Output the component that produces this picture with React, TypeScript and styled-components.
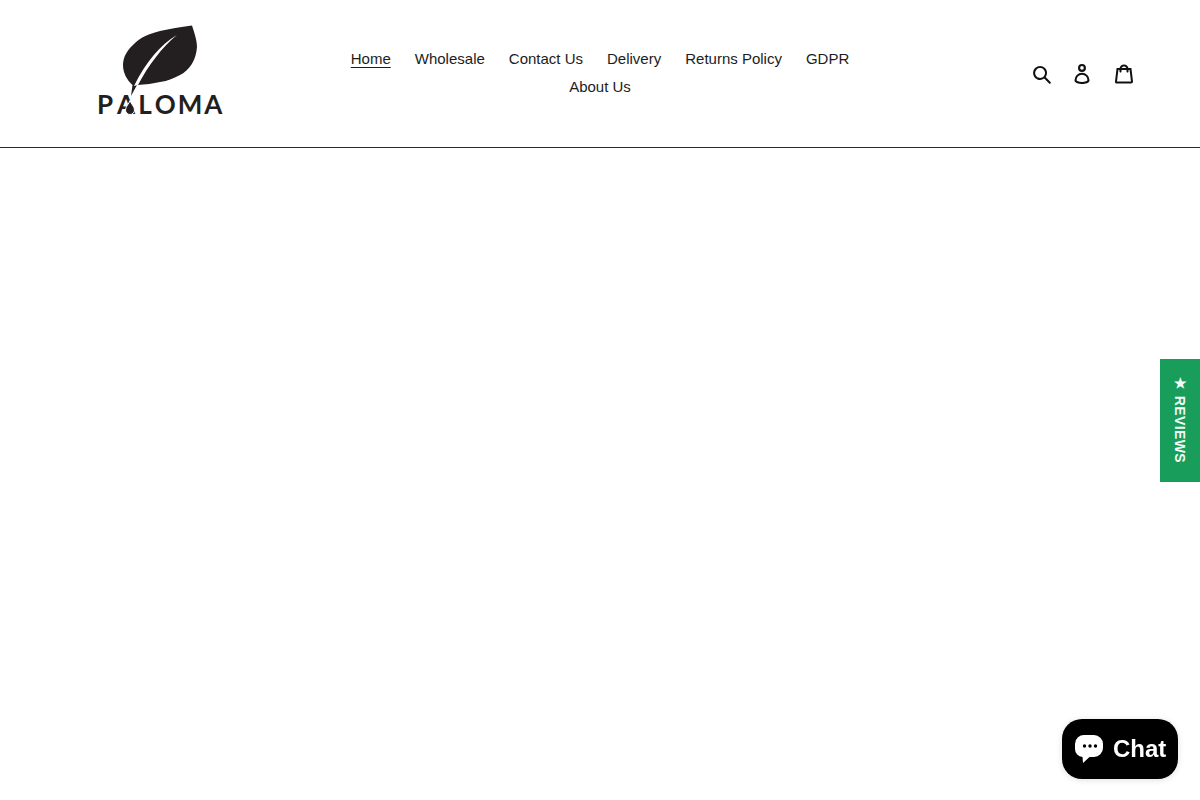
import React from "react";
import styled, { createGlobalStyle } from "styled-components";

const GlobalStyle = createGlobalStyle`
  html, body {
    margin: 0;
    padding: 0;
    background: #fff;
    font-family: "Liberation Sans", Arial, sans-serif;
    color: #1c1d1d;
  }
`;

const Page = styled.div`
  min-height: 800px;
`;

const Header = styled.header`
  display: grid;
  grid-template-columns: 1fr 545px 1fr;
  align-items: center;
  height: 147px;
  padding: 0 55px;
  border-bottom: 1px solid #2a2a2a;
`;

const Logo = styled.a`
  display: flex;
  flex-direction: column;
  align-items: center;
  width: 210px;
  padding-bottom: 7px;
`;

const Leaf = styled.svg`
  display: block;
  width: 80px;
  height: 72px;
`;

const LogoWord = styled.div`
  position: relative;
  display: flex;
  width: 126px;
  margin-top: -4px;
  font-family: Lato, "Liberation Sans", sans-serif;
  font-size: 26px;
  line-height: 24px;
  font-weight: 700;
  color: #231f20;
  white-space: nowrap;
`;

const Letter = styled.span<{ $left: number }>`
  margin-left: ${(props) => props.$left}px;
`;

const Drop = styled.svg`
  position: absolute;
  left: 28px;
  top: 8px;
  width: 10px;
  height: 15px;
`;

const Nav = styled.nav`
  display: flex;
  flex-wrap: wrap;
  justify-content: center;
  padding-bottom: 2px;
`;

const NavLink = styled.a<{ $active?: boolean }>`
  padding: 0 12px;
  font-size: 15px;
  line-height: 28px;
  color: #1c1d1d;
  text-decoration: ${(props) => (props.$active ? "underline" : "none")};
  text-underline-offset: 3px;
  text-decoration-thickness: 1px;
  cursor: pointer;
`;

const Icons = styled.div`
  display: flex;
  justify-content: flex-end;
  align-items: center;
  padding-right: 11px;
`;

const IconButton = styled.svg<{ $left?: number }>`
  display: block;
  width: 20px;
  height: 20px;
  margin-left: ${(props) => props.$left ?? 0}px;
  fill: #111;
`;

const ReviewsTab = styled.div`
  position: fixed;
  top: 359px;
  right: 0;
  display: flex;
  align-items: center;
  justify-content: center;
  box-sizing: border-box;
  width: 40px;
  height: 123px;
  padding-bottom: 2px;
  background: #189d5b;
  color: #f2fbf6;
  font-size: 14px;
  font-weight: 700;
  letter-spacing: 0.4px;
  writing-mode: vertical-rl;
`;

const ChatButton = styled.div`
  position: fixed;
  left: 1062px;
  top: 719px;
  display: flex;
  align-items: center;
  gap: 9px;
  box-sizing: border-box;
  width: 116px;
  height: 60px;
  padding-left: 12px;
  border-radius: 20px;
  background: #000;
  color: #fff;
  font-size: 24px;
  font-weight: 700;
  box-shadow: 0 1px 6px rgba(0, 0, 0, 0.12);
`;

const ChatIcon = styled.svg`
  width: 30px;
  height: 30px;
  fill: #fff;
`;

const links = ["Wholesale", "Contact Us", "Delivery", "Returns Policy", "GDPR", "About Us"];

export default function App() {
  return (
    <Page>
      <GlobalStyle />
      <Header>
        <Logo>
          <Leaf viewBox="120 24 80 72">
            <path
              fill="#231f20"
              d="M192 25.5C180 27 170 29 160 31C148 34 140 38 135 43C127 50 123 57 123 65C123 73 127 80 132.5 85L131 96L137 85C146 84.5 153 83.5 160 82C168 81 174 78 180 75C190 70 196 60 197 47C197 40 194 32 192 25.5Z"
            />
            <path fill="#fff" d="M177 35C160 45 146 62 134 86L138 85C148 66 162 47 177 35Z" />
          </Leaf>
          <LogoWord>
            <Letter $left={0}>P</Letter>
            <Letter $left={4}>A</Letter>
            <Letter $left={3}>L</Letter>
            <Letter $left={3}>O</Letter>
            <Letter $left={2}>M</Letter>
            <Letter $left={2}>A</Letter>
            <Drop viewBox="0 0 10 15">
              <path
                fill="#231f20"
                stroke="#fff"
                strokeWidth="1"
                d="M5 .5C6 4 9.5 6.5 9.5 10A4.5 4.5 0 0 1 .5 10C.5 6.5 4 4 5 .5Z"
              />
            </Drop>
          </LogoWord>
        </Logo>
        <Nav>
          <NavLink $active>Home</NavLink>
          {links.map((label) => (
            <NavLink key={label}>{label}</NavLink>
          ))}
        </Nav>
        <Icons>
          <IconButton viewBox="0 0 37 40">
            <path d="M35.6 36l-9.8-9.8c4.1-5.4 3.6-13.2-1.3-18.1-5.4-5.4-14.2-5.4-19.7 0-5.4 5.4-5.4 14.2 0 19.7 2.6 2.6 6.1 4.1 9.8 4.1 3 0 5.9-1 8.3-2.8l9.8 9.8c.4.4.9.6 1.4.6s1-.2 1.4-.6c.9-.9.9-2.1.1-2.9zm-20.9-8.2c-2.6 0-5.1-1-7-2.9-3.9-3.9-3.9-10.1 0-14C9.6 9 12.2 8 14.7 8s5.1 1 7 2.9c3.9 3.9 3.9 10.1 0 14-1.9 1.9-4.4 2.9-7 2.9z" />
          </IconButton>
          <IconButton $left={20} viewBox="0 0 28.33 37.68">
            <path d="M14.17 14.9a7.45 7.45 0 1 0-7.5-7.45 7.46 7.46 0 0 0 7.5 7.45zm0-10.91a3.45 3.45 0 1 1-3.5 3.46A3.46 3.46 0 0 1 14.17 4zM14.17 16.47A14.18 14.18 0 0 0 0 30.68c0 1.41.66 4 5.11 5.66a27.17 27.17 0 0 0 9.06 1.34c6.54 0 14.17-1.84 14.17-7a14.18 14.18 0 0 0-14.17-14.21zm0 17.21c-6.3 0-10.17-1.77-10.17-3a10.17 10.17 0 1 1 20.33 0c.01 1.23-3.86 3-10.16 3z" />
          </IconButton>
          <IconButton $left={22} viewBox="0 0 37 40">
            <path d="M36.5 34.8L33.3 8h-5.9C26.7 3.9 23 .8 18.5.8S10.3 3.9 9.6 8H3.7L.5 34.8c-.2 1.5.4 2.4.9 3 .5.5 1.4 1.2 3.1 1.2h28c1.3 0 2.4-.4 3.1-1.3.7-.7 1-1.8.9-2.9zm-18-30c2.2 0 4.1 1.4 4.7 3.2h-9.5c.7-1.9 2.6-3.2 4.8-3.2zM4.5 35l2.8-23h2.2v3c0 1.1.9 2 2 2s2-.9 2-2v-3h10v3c0 1.1.9 2 2 2s2-.9 2-2v-3h2.2l2.8 23h-28z" />
          </IconButton>
        </Icons>
      </Header>
      <ReviewsTab>★ REVIEWS</ReviewsTab>
      <ChatButton>
        <ChatIcon viewBox="0 0 30 30">
          <path d="M11 1H20A9 9 0 0 1 29 10V14A9 9 0 0 1 20 23H15.5L9 29L8.5 23A8 8 0 0 1 1 15V10A9 9 0 0 1 11 1Z" />
          <circle cx="10.5" cy="12" r="1.7" fill="#000" />
          <circle cx="16" cy="12" r="1.7" fill="#000" />
          <circle cx="21.5" cy="12" r="1.7" fill="#000" />
        </ChatIcon>
        Chat
      </ChatButton>
    </Page>
  );
}
